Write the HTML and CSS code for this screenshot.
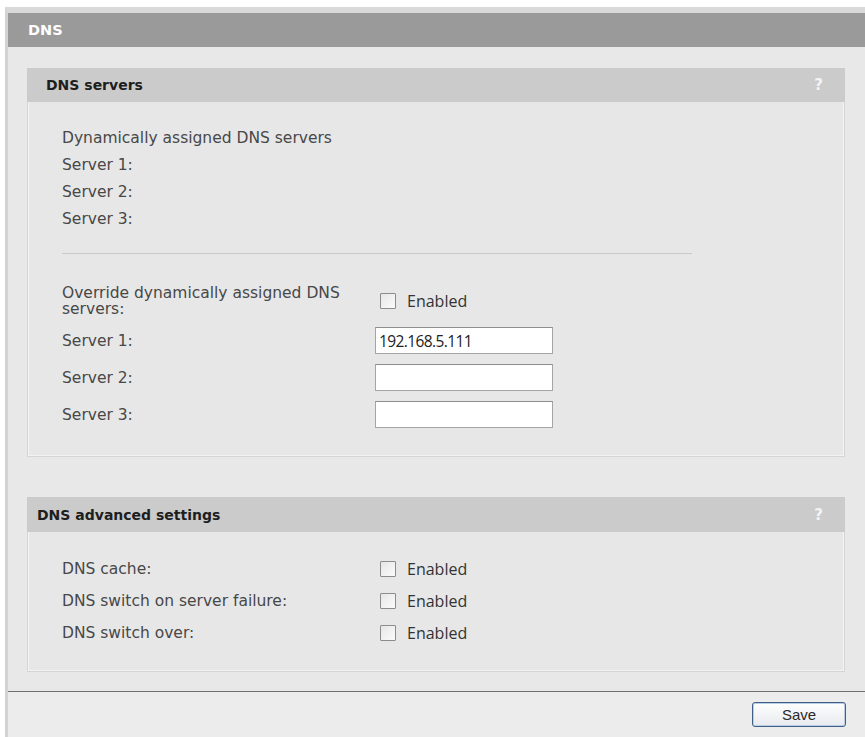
FILE: index.html
```html
<!DOCTYPE html>
<html lang="en">
<head>
<meta charset="utf-8">
<title>DNS</title>
<link rel="stylesheet" href="styles.css">
</head>
<body>
<div class="frame">
  <div class="title-bar">DNS</div>
  <div class="content">
    <section class="panel servers">
      <div class="panel-head">
        <span class="panel-title">DNS servers</span>
        <span class="help">?</span>
      </div>
      <div class="panel-body">
        <div class="info-list">
          <div class="info-row">Dynamically assigned DNS servers</div>
          <div class="info-row">Server 1:</div>
          <div class="info-row">Server 2:</div>
          <div class="info-row">Server 3:</div>
        </div>
        <div class="divider"></div>
        <div class="form-grid">
          <div class="label two-line">Override dynamically assigned DNS servers:</div>
          <label class="check"><input type="checkbox" class="box"><span>Enabled</span></label>
          <div class="label">Server 1:</div>
          <input class="text-field" type="text" value="192.168.5.111">
          <div class="label">Server 2:</div>
          <input class="text-field" type="text" value="">
          <div class="label">Server 3:</div>
          <input class="text-field" type="text" value="">
        </div>
      </div>
    </section>

    <section class="panel advanced">
      <div class="panel-head">
        <span class="panel-title">DNS advanced settings</span>
        <span class="help">?</span>
      </div>
      <div class="panel-body">
        <div class="check-grid">
          <div class="label">DNS cache:</div>
          <label class="check"><input type="checkbox" class="box"><span>Enabled</span></label>
          <div class="label">DNS switch on server failure:</div>
          <label class="check"><input type="checkbox" class="box"><span>Enabled</span></label>
          <div class="label">DNS switch over:</div>
          <label class="check"><input type="checkbox" class="box"><span>Enabled</span></label>
        </div>
      </div>
    </section>
  </div>
  <div class="footer">
    <button class="save" type="button">Save</button>
  </div>
</div>
</body>
</html>
```

FILE: styles.css
```css
html, body {
  margin: 0;
  padding: 0;
  background: #ffffff;
}

body {
  font-family: "DejaVu Sans", Verdana, sans-serif;
  height: 737px;
  overflow: hidden;
}

.frame {
  margin: 7px 0 0 5px;
  border-left: 3px solid #d3d3d3;
  border-top: 6px solid #d9d9d9;
  background: #e8e8e8;
  height: 724px;
  display: flex;
  flex-direction: column;
}

.title-bar {
  height: 34px;
  line-height: 34px;
  padding-left: 20px;
  background: #9a9a9a;
  color: #ffffff;
  font-weight: bold;
  font-size: 14.5px;
}

.content {
  padding: 21px 20px 19px 19px;
  background: #e8e8e8;
  display: flex;
  flex-direction: column;
  gap: 40px;
}

.panel {
  border: 1px solid #d5d5d5;
  border-top: none;
  background: #e7e7e7;
  box-shadow: inset 1px 0 0 #f3f3f3, inset -1px -1px 0 #f3f3f3;
}

.panel-head {
  height: 34px;
  background: #cbcbcb;
  display: flex;
  align-items: center;
  justify-content: space-between;
  padding: 0 22px 0 19px;
  margin: 0 -1px;
}

.advanced .panel-head {
  height: 35px;
  padding-left: 10px;
}

.panel-title {
  font-weight: bold;
  font-size: 14px;
  color: #1e1e1e;
}

.help {
  color: #f4f4f4;
  font-weight: bold;
  font-size: 15px;
}

.servers .panel-body {
  padding: 23px 0 28px 34px;
}

.advanced .panel-body {
  padding: 21px 0 22px 34px;
}

.info-row {
  height: 27px;
  line-height: 27px;
  font-size: 15.5px;
  color: #484848;
}

.divider {
  width: 630px;
  height: 1px;
  background: #c9c9c9;
  margin: 20px 0 31px;
}

.form-grid {
  display: grid;
  grid-template-columns: 313px 178px;
  grid-template-rows: 32px 27px 27px 27px;
  row-gap: 10px;
  align-items: center;
}

.check-grid {
  display: grid;
  grid-template-columns: 313px auto;
  grid-auto-rows: 32px;
  align-items: center;
}

.label {
  font-size: 15.5px;
  color: #484848;
}

.label.two-line {
  line-height: 16px;
  width: 290px;
}

.check {
  display: flex;
  align-items: center;
  gap: 11px;
  padding-left: 5px;
  font-family: "Open Sans", "Noto Sans", sans-serif;
  font-size: 16px;
  color: #333333;
}

.box {
  appearance: none;
  -webkit-appearance: none;
  width: 16px;
  height: 16px;
  margin: 0;
  border: 1px solid #8c8c8c;
  background: linear-gradient(135deg, #e6e6e6, #fbfbfb);
  border-radius: 1px;
}

.text-field {
  box-sizing: border-box;
  width: 178px;
  height: 27px;
  margin: 0;
  padding: 0 3px;
  border: 1px solid #a5a5a5;
  border-top-color: #8e8e8e;
  background: #ffffff;
  font-family: "Open Sans", "Noto Sans", sans-serif;
  font-size: 15.5px;
  letter-spacing: -0.6px;
  color: #222222;
}

.footer {
  flex: 1;
  border-top: 1px solid #707070;
  background: #ececec;
  display: flex;
  justify-content: flex-end;
  align-items: flex-start;
  padding: 10px 19px 0 0;
}

.save {
  width: 94px;
  height: 25px;
  border: 1px solid #3f5f86;
  border-radius: 3px;
  box-shadow: inset 0 0 0 1px #b9cde4;
  background: linear-gradient(#fefefe, #e7eaee);
  font-family: "Liberation Sans", Arial, sans-serif;
  font-size: 15px;
  color: #2a2a2a;
  padding: 0;
}
```
